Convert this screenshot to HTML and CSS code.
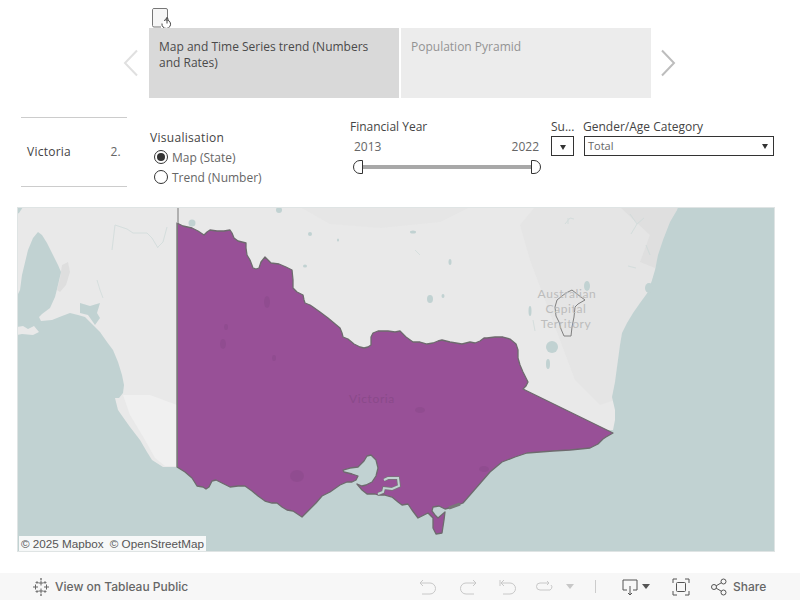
FILE: index.html

```html
<!DOCTYPE html>
<html lang="en">
<head>
  <meta charset="UTF-8">
  <title>Victoria map</title>
  <link rel="stylesheet" href="styles.css">
</head>
<body>

<div class="tab-icon-row">
  <svg class="tab-icon" width="22" height="20" viewBox="0 0 22 20">
    <path d="M9 19H2a1.500 1.500 0 0 1-1.500-1.500V1.500A1.500 1.500 0 0 1 2 0.500h12a1.500 1.500 0 0 1 1.500 1.500V10" fill="#f6f6f6" stroke="#777"/>
    <path d="M12 12.500a4.300 4.300 0 1 1-2 3" fill="#fff" stroke="#444"/>
    <path d="M15 9.500v6M13.500 11.500l1.500-2 1.500 2" fill="none" stroke="#444"/>
  </svg>
</div>

<div class="tabs">
  <svg class="arrow" width="16" height="28" viewBox="0 0 16 28"><path d="M14 1.500 2 14l12 12.500" fill="none" stroke="#e0e0e0" stroke-width="2"/></svg>
  <div class="tab active">Map and Time Series trend (Numbers and Rates)</div>
  <div class="tab">Population Pyramid</div>
  <svg class="arrow" width="16" height="28" viewBox="0 0 16 28"><path d="M2 1.500 14 14 2 26.500" fill="none" stroke="#bdbdbd" stroke-width="2"/></svg>
</div>

<div class="filters">
  <div class="legend">
    <span class="legend-name">Victoria</span>
    <span class="legend-value">2.</span>
  </div>

  <div class="vis">
    <div class="filter-title">Visualisation</div>
    <div class="radio checked"><span class="radio-mark"></span>Map (State)</div>
    <div class="radio"><span class="radio-mark"></span>Trend (Number)</div>
  </div>

  <div class="year">
    <div class="filter-title">Financial Year</div>
    <div class="year-range"><span>2013</span><span>2022</span></div>
    <div class="slider">
      <span class="thumb left"></span>
      <span class="track"></span>
      <span class="thumb right"></span>
    </div>
  </div>

  <div class="su">
    <div class="filter-title">Su...</div>
    <div class="select"><span class="caret"></span></div>
  </div>

  <div class="gender">
    <div class="filter-title">Gender/Age Category</div>
    <div class="select"><span>Total</span><span class="caret"></span></div>
  </div>
</div>

<div class="map">
  <svg class="map-svg" width="758" height="345" viewBox="17 207 758 345">
    <rect x="17" y="207" width="758" height="345" fill="#e9e9e9"/>

    <!-- land shading -->
    <path d="M535 207H678L664 240 655 270 648 292 633 313 622 333 617 367 615 400 600 405 575 380 560 340 545 300 530 260 520 225Z" fill="#e5e5e5"/>
    <path d="M620 207H678L664 240 655 268 640 262 650 235Z" fill="#dfdfdf"/>
    <path d="M300 207H470L440 222 380 228 330 224Z" fill="#e6e6e6"/>
    <path d="M62 265 68 262 70 272 66 285 60 292 57 290 60 278Z" fill="#dedede"/>
    <path d="M123 395 130 415 145 440 155 458 165 466 177 466V405L150 395Z" fill="#f0f0f0"/>

    <!-- sea, runs under the state along its coast -->
    <path class="water" d="M678 207H775V552H17V296L20 290 22 275 28 250 33 238 38 232 42 235 47 243 53 255 58 265 61 272 58 285 55 297 50 308 42 314 39 317 41 321 52 320 62 316 70 313 78 315 85 317 92 324 100 332 107 342 113 350 118 362 122 375 124 385 123 393 119 398 115 398 118 410 125 420 130 427 140 440 147 452 152 460 163 467 177 467 177 440 613 430 615 420 615 410 612 397 615 382 617 367 620 345 622 333 627 323 633 313 640 303 648 292 652 280 655 270 658 255 663 240 670 222 677 210Z"/>
    <path class="water" d="M17 207H23L19 213 17 214Z"/>
    <path class="water" d="M80 303 90 306 100 303 97 313 100 318 95 325 88 315 80 313Z"/>
    <path d="M17 327 23 326 28 329 34 326 39 332 33 335 22 334 17 335Z" fill="#e9e9e9"/>

    <!-- Victoria -->
    <path class="state" d="M177 223 183 226 192 228 198 231 204 235 207 232 210 230 217 231 224 231 230 230 232 233 234 238 238 241 242 242 246 243 246 248 247 255 250 260 253 268 256 269 259 268 261 262 265 257 268 260 271 263 279 264 286 267 292 270 293 280 293 288 297 292 303 295 304 300 305 303 310 305 313 307 320 312 328 318 334 323 340 328 342 333 343 337 348 339 354 344 360 347 364 348 368 347 371 345 371 337 373 333 378 331 388 331 395 332 400 331 406 337 413 342 420 342 427 344 433 343 438 341 442 340 450 342 456 343 462 344 466 343 470 342 475 343 480 341 484 338 487 338 495 337 503 337 510 339 516 344 518 350 518 358 520 365 523 372 526 378 528 382 526 386 523 389 613 433 606 437 603 439 598 444 590 448 570 450 553 451 540 452 527 453 515 457 502 462 490 472 463 503 453 507 445 509 443 508 439 506 433 507 432 511 435 515 438 518 445 512 444 520 442 533 436 534 433 528 433 518 428 513 422 516 418 518 412 510 408 504 402 505 398 502 392 497 385 495 378 495 375 494 367 494 362 490 357 484 362 486 366 485 372 482 376 476 378 468 376 460 371 455 367 456 364 461 358 467 350 468 343 470 344 472 352 474 358 476 356 480 352 482 347 482 340 485 330 492 322 496 316 503 309 510 302 517 293 511 287 510 282 507 277 503 272 503 265 501 258 496 252 491 245 486 238 486 230 487 222 483 216 480 212 481 209 487 206 489 203 487 197 486 192 478 185 472 177 467Z"/>
    <path d="M384 480 388 478 398 478 399 486 392 489 384 488 383 492 378 494" class="bay-edge"/>
    <path d="M384 480 388 478 398 478 399 486 392 489 384 488 383 492 378 494" class="bay"/>
    <path d="M178 207V223" stroke="#b0b0b0" stroke-width="2"/>
    <path d="M177.500 223V467" stroke="#777"/>
    <path d="M449 508 460 504" stroke="#777" stroke-width="3"/>

    <!-- darker marks inside the state -->
    <g class="marks">
      <ellipse cx="267" cy="302" rx="3" ry="6"/>
      <ellipse cx="223" cy="344" rx="3" ry="5"/>
      <ellipse cx="226" cy="327" rx="2" ry="3"/>
      <ellipse cx="274" cy="358" rx="2" ry="3"/>
      <ellipse cx="297" cy="476" rx="7" ry="6"/>
      <ellipse cx="484" cy="469" rx="5" ry="3"/>
      <ellipse cx="420" cy="410" rx="5" ry="3"/>
    </g>

    <!-- lakes -->
    <g class="water">
      <ellipse cx="192" cy="223" rx="3.500" ry="3.500"/>
      <ellipse cx="279" cy="210" rx="3" ry="3"/>
      <ellipse cx="310" cy="234" rx="2" ry="2"/>
      <ellipse cx="338" cy="240" rx="1" ry="1.500"/>
      <ellipse cx="305" cy="266" rx="2" ry="1.500"/>
      <ellipse cx="413" cy="232" rx="3" ry="1.500"/>
      <ellipse cx="450" cy="262" rx="1.500" ry="3"/>
      <ellipse cx="430" cy="299" rx="3" ry="4"/>
      <ellipse cx="443" cy="296" rx="1.500" ry="2"/>
      <ellipse cx="587" cy="286" rx="3" ry="5"/>
      <ellipse cx="530" cy="311" rx="1.500" ry="5"/>
      <ellipse cx="552" cy="347" rx="6" ry="6"/>
      <ellipse cx="548" cy="364" rx="2" ry="5"/>
      <ellipse cx="649" cy="288" rx="4" ry="5"/>
    </g>
    <!-- rivers -->
    <g class="river">
      <path d="M112 250 115 225 127 229 133 233 147 233 152 238 158 248"/>
      <path d="M167 227 163 242 158 247"/>
      <path d="M97 280 100 290 103 298"/>
      <path d="M630 214 637 224 644 218M637 224 631 234"/>
      <path d="M565 224 570 218 574 219M568 218V224"/>
      <path d="M415 250 420 255M533 320 535 331"/>
      <path d="M646 245 650 255M628 266 636 268"/>
    </g>

    <!-- capital territory outline and labels -->
    <path d="M557 300 562 296 566 293 572 290 577 294 585 300 578 304 575 307 574 317 572 327 571 336 564 336 561 329 559 322 556 316 555 307Z" fill="none" stroke="#808080"/>
    <text class="label" x="567" y="298">Australian</text>
    <text class="label" x="566" y="313">Capital</text>
    <text class="label" x="566" y="328">Territory</text>
    <text class="label vic" x="372" y="403">Victoria</text>
    <rect x="17.500" y="207.500" width="757" height="344" fill="none" stroke="#dfe4e4"/>
  </svg>
  <div class="attribution"><span>© 2025 Mapbox</span><span>© OpenStreetMap</span></div>
</div>

<div class="toolbar">
  <div class="brand">
    <svg class="logo" width="18" height="18" viewBox="0 0 18 18" fill="none" stroke="#666">
      <path d="M9 2.500v5M6.500 5h5M9 10.500v5M6.500 13h5M3.500 6.500v5M1 9h5M14.500 6.500v5M12 9h5" stroke-width="1"/>
      <path d="M5 3v3M3.500 4.500h3M13 3v3M11.500 4.500h3M5 12v3M3.500 13.500h3M13 12v3M11.500 13.500h3M9 0v2M8 1h2M9 16v2M8 17h2" stroke-width=".8"/>
    </svg>
    <span class="toolbar-link">View on Tableau Public</span>
  </div>

  <svg width="18" height="18" viewBox="0 0 18 18" fill="none" stroke="#c8c8c8"><path d="M1 5h10a5.500 5.500 0 0 1 0 11H3M4 2 1 5l3 3"/></svg>
  <svg class="gap-redo" width="18" height="18" viewBox="0 0 18 18" fill="none" stroke="#c8c8c8"><path d="M17 5H7a5.500 5.500 0 0 0 0 11h8M14 2l3 3-3 3"/></svg>
  <svg class="gap-redo" width="18" height="18" viewBox="0 0 18 18" fill="none" stroke="#c8c8c8"><path d="M1 2v6M2 5h9a5.500 5.500 0 0 1 0 11H4M5 2 2 5l3 3"/></svg>
  <svg class="gap-refresh" width="18" height="18" viewBox="0 0 18 18" fill="none" stroke="#c8c8c8"><path d="M14 5H5a3 3 0 0 0 0 7h8a3 3 0 0 0 3-5M12 3l2 2-2 2"/></svg>
  <span class="mini-caret off"></span>
  <span class="sep"></span>
  <svg width="16" height="18" viewBox="0 0 16 18" fill="none" stroke="#555"><path d="M5 12H1V2h14v10h-4M8 8v9M6 15l2 2 2-2"/></svg>
  <span class="mini-caret"></span>
  <svg class="fit" width="18" height="18" viewBox="0 0 18 18" fill="none" stroke="#555"><path d="M1 5V1h4M13 1h4v4M17 13v4h-4M5 17H1v-4"/><rect x="4.500" y="4.500" width="9" height="9" rx="1"/></svg>
  <svg class="share-icon" width="16" height="18" viewBox="0 0 16 18" fill="none" stroke="#555"><circle cx="3" cy="9" r="2.500"/><circle cx="12.500" cy="3.500" r="2.500"/><circle cx="12.500" cy="14.500" r="2.500"/><path d="M5.200 7.800 10.300 4.800M5.200 10.200l5.100 3"/></svg>
  <span class="toolbar-link share">Share</span>
</div>

</body>
</html>
```

FILE: styles.css

```css
* { box-sizing: border-box; }
body {
  margin: 0;
  height: 600px;
  overflow: hidden;
  background: #fff;
  color: #444;
  font-family: "Open Sans", "Liberation Sans", sans-serif;
  font-size: 12px;
}

.tab-icon-row {
  height: 28px;
  padding: 8px 0 0 152px;
}
.tab-icon {
  display: block;
}

.tabs {
  display: flex;
  align-items: center;
  height: 70px;
  padding-left: 123px;
}
.arrow {
  flex: none;
}
.tab {
  width: 250px;
  height: 70px;
  margin-left: 2px;
  padding: 11px 10px;
  background: #ececec;
  color: #939393;
  font-size: 12px;
  line-height: 16px;
}
.tab.active {
  margin-left: 10px;
  background: #d9d9d9;
  color: #4a4a4a;
}
.tabs .tab + .arrow {
  margin-left: 9px;
}

.filters {
  display: flex;
  align-items: flex-start;
  height: 90px;
  margin-top: 19px;
  padding-left: 21px;
}
.legend {
  display: flex;
  align-items: center;
  justify-content: space-between;
  width: 106px;
  height: 70px;
  padding: 0 6px 1px;
  border-top: 1px solid #ccc;
  border-bottom: 1px solid #ccc;
  letter-spacing: .25px;
}
.legend-value {
  color: #666;
}
.filter-title {
  height: 20px;
  line-height: 20px;
  color: #444;
}
.vis {
  width: 200px;
  margin-left: 23px;
  padding-top: 11px;
}
.vis .filter-title {
  height: 19px;
  letter-spacing: .3px;
}
.radio {
  display: flex;
  align-items: center;
  gap: 4px;
  height: 20px;
  padding-left: 4px;
  color: #666;
}
.radio-mark {
  position: relative;
  width: 14px;
  height: 14px;
  border: 1px solid #333;
  border-radius: 50%;
}
.radio.checked .radio-mark::after {
  content: "";
  position: absolute;
  top: 2px;
  left: 2px;
  width: 8px;
  height: 8px;
  border-radius: 50%;
  background: #333;
}
.year {
  width: 191px;
}
.year-range {
  display: flex;
  justify-content: space-between;
  padding: 0 2px 0 4px;
  line-height: 20px;
  color: #666;
}
.slider {
  display: flex;
  align-items: center;
  height: 14px;
  margin-top: 3px;
  padding-left: 3px;
}
.track {
  flex: 1;
  height: 4px;
  background: #a8a8a8;
}
.thumb {
  width: 10px;
  height: 14px;
  border: 1px solid #333;
  background: #fff;
}
.thumb.left {
  border-radius: 7px 0 0 7px;
}
.thumb.right {
  border-radius: 0 7px 7px 0;
}
.su {
  width: 23px;
  margin-left: 10px;
}
.gender {
  width: 190px;
  margin-left: 10px;
}
.gender .filter-title {
  margin-left: -1px;
}
.su .filter-title, .gender .filter-title {
  margin-bottom: -1px;
}
.select {
  display: flex;
  align-items: center;
  justify-content: space-between;
  height: 20px;
  padding: 0 5px 2px 3px;
  border: 1px solid #333;
  font-size: 11px;
  color: #666;
}
.su .select {
  justify-content: center;
  padding: 0;
}
.caret {
  width: 0;
  height: 0;
  margin-top: 2px;
  border-left: 3.500px solid transparent;
  border-right: 3.500px solid transparent;
  border-top: 5px solid #333;
}

.map {
  position: relative;
  width: 758px;
  height: 345px;
  margin-left: 17px;
}
.map-svg {
  display: block;
}
.water {
  fill: #c1d2d2;
}
.river {
  fill: none;
  stroke: #cddad9;
  opacity: .7;
}
.state {
  fill: #985097;
  stroke: #6e6a6e;
  stroke-width: 1.3;
  stroke-linejoin: round;
}
.bay-edge {
  fill: none;
  stroke: #777;
  stroke-width: 3.500;
}
.bay {
  fill: none;
  stroke: #c1d2d2;
  stroke-width: 2;
}
.marks {
  fill: #8b4a8b;
  opacity: .55;
}
.label {
  font-family: Lato, "Liberation Sans", sans-serif;
  font-size: 12px;
  fill: #bcbcbc;
  text-anchor: middle;
  letter-spacing: .6px;
}
.label.vic {
  fill: #8a4a8a;
}
.attribution {
  position: absolute;
  left: 2px;
  bottom: 1px;
  display: flex;
  gap: 6px;
  height: 15px;
  padding: 0 2px;
  background: rgba(255, 255, 255, .85);
  font-family: "Liberation Sans", sans-serif;
  font-size: 11.700px;
  line-height: 15px;
  color: #555;
}

.toolbar {
  display: flex;
  align-items: center;
  height: 27px;
  margin-top: 21px;
  padding-left: 32px;
  background: #f7f7f7;
}
.brand {
  display: flex;
  align-items: center;
  width: 387px;
}
.logo {
  flex: none;
}
.toolbar-link {
  margin-left: 5px;
  font-family: Inter, "Liberation Sans", sans-serif;
  font-size: 12px;
  font-weight: 500;
  color: #666;
}
.gap-redo {
  margin-left: 22px;
}
.gap-refresh {
  margin-left: 18px;
}
.mini-caret {
  width: 0;
  height: 0;
  margin-left: 4px;
  border-left: 4px solid transparent;
  border-right: 4px solid transparent;
  border-top: 5px solid #555;
}
.mini-caret.off {
  margin-left: 13px;
  border-top-color: #c8c8c8;
}
.sep {
  width: 1px;
  height: 13px;
  margin: 0 26px 0 21px;
  background: #ccc;
}
.fit {
  margin-left: 22px;
}
.share-icon {
  margin-left: 21px;
}
.share {
  margin-left: 6px;
}
```
